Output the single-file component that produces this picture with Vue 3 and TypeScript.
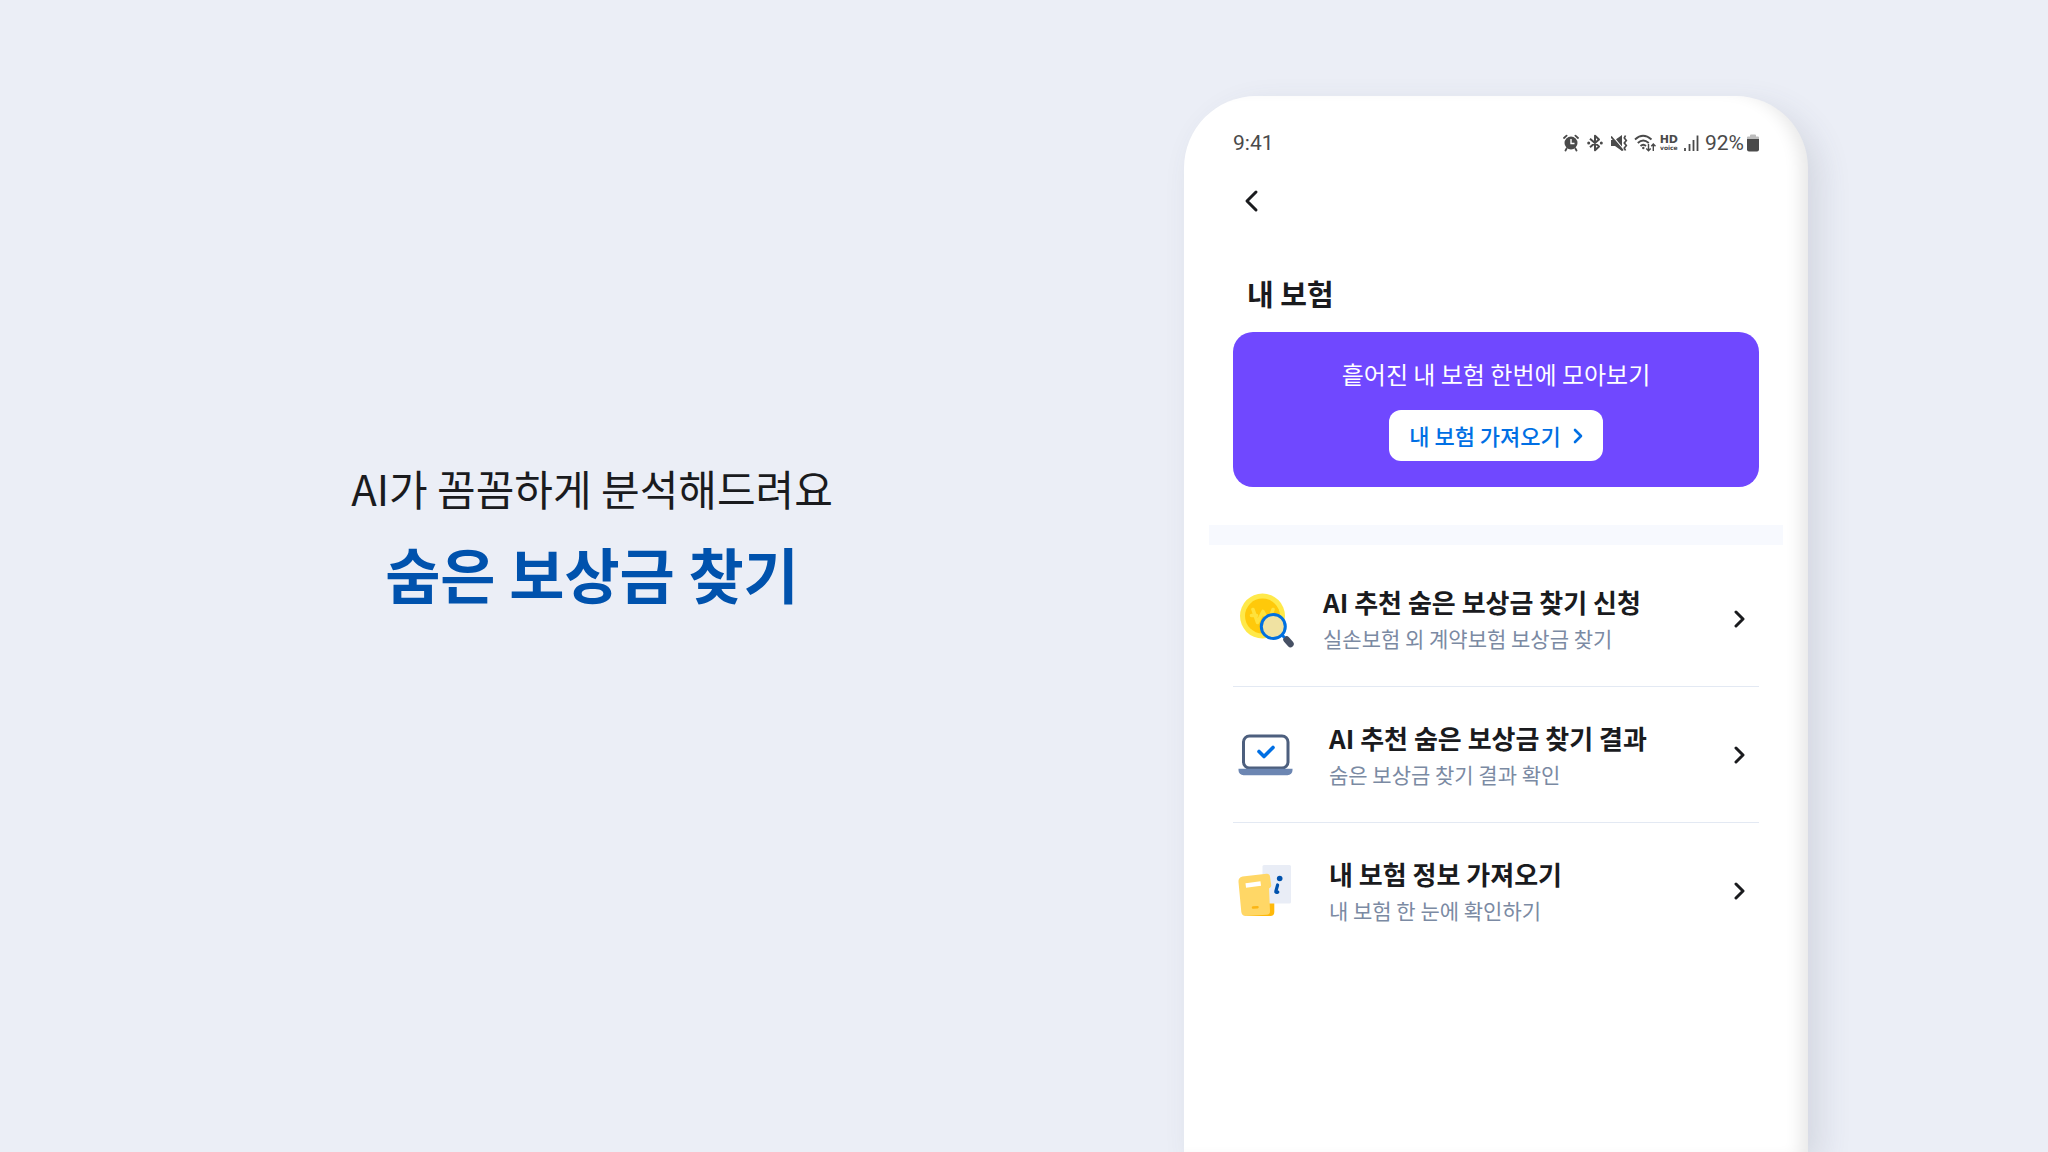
<script setup lang="ts">
type IconKind = 'coin' | 'laptop' | 'folder'

interface MenuItem {
  icon: IconKind
  title: string
  description: string
}

const menu: MenuItem[] = [
  { icon: 'coin', title: 'AI 추천 숨은 보상금 찾기 신청', description: '실손보험 외 계약보험 보상금 찾기' },
  { icon: 'laptop', title: 'AI 추천 숨은 보상금 찾기 결과', description: '숨은 보상금 찾기 결과 확인' },
  { icon: 'folder', title: '내 보험 정보 가져오기', description: '내 보험 한 눈에 확인하기' },
]
</script>

<template>
  <div class="page">
    <header class="intro">
      <p class="intro-lead">AI가 꼼꼼하게 분석해드려요</p>
      <h1 class="intro-title">숨은 보상금 찾기</h1>
    </header>

    <main class="phone">
      <div class="status">
        <span>9:41</span>
        <div class="status-icons">
          <svg class="glyph" width="16" height="18" viewBox="0 0 16 18">
            <circle cx="8" cy="9" r="6.5" fill="#4a4a4a" />
            <path d="M1 4 3.6 1.6M15 4l-2.600-2.400M3.600 14.500 2.500 16.500M12.400 14.500l1.100 2" stroke="#4a4a4a" stroke-width="1.800" fill="none" stroke-linecap="round" />
            <path d="M8 5v4.500h3.500" stroke="#fff" stroke-width="1.400" fill="none" />
          </svg>
          <svg class="glyph" width="16" height="18" viewBox="0 0 16 18">
            <path d="M3 4.800 12 12.500 8 16.300V1.700l4 3.800L3 13.200" stroke="#4a4a4a" stroke-width="2" fill="none" stroke-linejoin="round" />
            <circle cx="1.700" cy="9" r="1.500" fill="#4a4a4a" />
            <circle cx="14.300" cy="9" r="1.500" fill="#4a4a4a" />
          </svg>
          <svg class="glyph mute" width="17" height="18" viewBox="0 0 17 18">
            <path d="M0 6h4l7-5v16l-7-5H0z" fill="#4a4a4a" />
            <path d="M1 1.500 13 16" stroke="#fff" stroke-width="1.200" />
            <path d="M0 2.500 12 16.500" stroke="#4a4a4a" stroke-width="1.800" />
            <path d="M14.500 1.500 13.300 4l2 2.500-2 2.500 2 2.500-2 2.500 1.200 2.500" stroke="#4a4a4a" stroke-width="1.700" fill="none" />
          </svg>
          <svg class="glyph wifi" width="22" height="18" viewBox="0 0 22 18">
            <g stroke="#4a4a4a" stroke-width="1.800" fill="none">
              <path d="M1 5.500q8-7.500 16.500 0M3.800 9q5.300-5 11 0M6.500 12q2.700-2.500 5.500 0" />
              <path d="M14.500 10v7M12.300 14.500l2.200 2.300 2.200-2.300M19.300 17v-7M17.300 12.300l2-2.300 2.200 2.300" stroke-width="1.400" />
            </g>
            <circle cx="9.300" cy="14" r="1.200" fill="#4a4a4a" />
          </svg>
          <span class="hd"><b>HD</b><small>voice</small></span>
          <svg class="glyph signal" width="15" height="18" viewBox="0 0 15 18">
            <path d="M1 14v3M5.500 10v7M9.500 6v11M13.500 1.500V17" stroke="#4a4a4a" stroke-width="1.800" />
          </svg>
          <span>92%</span>
          <svg class="glyph battery" width="12" height="18" viewBox="0 0 12 18">
            <path d="M0 5V3.500Q0 2.500 1 2.500H3V1.500Q3 .5 4 .5H8Q9 .5 9 1.500V2.500H11Q12 2.500 12 3.500V5z" fill="#bdbdbd" />
            <path d="M0 5H12V15.500Q12 17.500 10 17.500H2Q0 17.500 0 15.500z" fill="#4a4a4a" />
          </svg>
        </div>
      </div>

      <button class="back" type="button" aria-label="뒤로">
        <svg width="16" height="24" viewBox="0 0 16 24">
          <path d="M13 3 4 12l9 9" fill="none" stroke="#1a1b1e" stroke-width="3" stroke-linecap="round" stroke-linejoin="round" />
        </svg>
      </button>

      <h2 class="heading">내 보험</h2>

      <section class="banner">
        <p class="banner-text">흩어진 내 보험 한번에 모아보기</p>
        <button class="banner-button" type="button">
          내 보험 가져오기
          <svg width="10" height="16" viewBox="0 0 10 16">
            <path d="M2 2l6 6-6 6" fill="none" stroke="#006fe4" stroke-width="2.600" stroke-linecap="round" stroke-linejoin="round" />
          </svg>
        </button>
      </section>

      <div class="separator"></div>

      <ul class="menu">
        <li v-for="item in menu" :key="item.title">
          <a class="row" href="#">
            <span class="row-icon" :class="item.icon">
              <svg v-if="item.icon === 'coin'" width="62" height="60" viewBox="0 0 62 60">
                <circle cx="29.500" cy="27" r="22.500" fill="#ffe94a" />
                <circle cx="29.500" cy="27" r="17.500" fill="#ffc90a" />
                <path d="M20 20.500l4.500 13 5.500-11 5.500 11 4.500-13M18.500 26.500h5" fill="none" stroke="#ffe23c" stroke-width="3.600" stroke-linecap="round" stroke-linejoin="round" />
                <path d="M53.500 50.500l4 4.500" stroke="#465064" stroke-width="6.500" stroke-linecap="round" />
                <path d="M48.500 45.500l3 3" stroke="#0070e0" stroke-width="3" />
                <circle cx="40.300" cy="37.500" r="12" fill="#f0e2a2" stroke="#0070e0" stroke-width="3" />
              </svg>
              <svg v-else-if="item.icon === 'laptop'" width="62" height="60" viewBox="0 0 62 60">
                <rect x="10.500" y="11" width="44.500" height="32" rx="6" fill="#fff" stroke="#4d5f7e" stroke-width="3" />
                <path d="M5.500 43.800h54v1.400a5 5 0 0 1-5 5h-44a5 5 0 0 1-5-5z" fill="#6c86b2" />
                <path d="M26 26.500l5 5 9-9" fill="none" stroke="#006fe4" stroke-width="3.600" stroke-linecap="round" stroke-linejoin="round" />
              </svg>
              <svg v-else width="62" height="60" viewBox="0 0 62 60">
                <path d="M14 55h23.300a4 4 0 0 0 4-4V30L12 42z" fill="#ffb90a" />
                <rect x="29.500" y="4" width="28.500" height="38.500" rx="1.500" fill="#e9edf6" />
                <path d="M9.500 15.500l24-2.700q3-.3 3.500 2.700l1.200 8.500q.3 2.500-2.200 3.500L37 50q.3 3.500-3.500 3.800L13 55q-4 .2-4.700-4L5.500 21q-.5-4.500 4-5.500z" fill="#ffd766" />
                <path d="M15 24.200l10.500-1.400" stroke="#fff" stroke-width="4.500" stroke-linecap="square" stroke-linejoin="round" />
                <path d="M20 46.600l4.500-.4" stroke="#fbb515" stroke-width="2.500" stroke-linecap="round" />
                <circle cx="46.700" cy="17.500" r="2.800" fill="#0052ad" />
                <path d="M44.600 24l-1.800 6.500q-.3 1.200 2 .7" fill="none" stroke="#0052ad" stroke-width="3.200" stroke-linecap="round" stroke-linejoin="round" />
              </svg>
            </span>
            <span class="row-text">
              <strong class="row-title">{{ item.title }}</strong>
              <span class="row-description">{{ item.description }}</span>
            </span>
            <svg class="row-arrow" width="12" height="20" viewBox="0 0 12 20">
              <path d="M2 3l7 7-7 7" fill="none" stroke="#1a1b1e" stroke-width="3" stroke-linecap="round" stroke-linejoin="round" />
            </svg>
          </a>
        </li>
      </ul>
    </main>
  </div>
</template>

<style>
body {
  margin: 0;
  background: #ebeef6;
}
</style>

<style scoped>
.page {
  display: grid;
  grid-template-columns: 1fr 624px;
  padding-right: 240px;
  min-height: 100vh;
  box-sizing: border-box;
  overflow: hidden;
  color: #1a1b1e;
  font-family: "Noto Sans CJK KR", sans-serif;
}

p,
h1,
h2,
ul {
  margin: 0;
  padding: 0;
}

button {
  font: inherit;
  border: 0;
  cursor: pointer;
}

.intro {
  padding-top: 446px;
  text-align: center;
}

.intro-lead {
  font-size: 42px;
  line-height: 84px;
}

.intro-title {
  color: #0052ad;
  font-size: 60px;
  line-height: 86px;
  font-weight: 700;
}

.phone {
  display: flex;
  flex-direction: column;
  margin-top: 96px;
  padding: 32px 49px 0;
  border-radius: 72px 72px 0 0;
  background: #fff;
  box-shadow:
    12px 12px 32px rgba(70, 80, 100, 0.14),
    inset -16px 0 16px -8px rgba(0, 0, 0, 0.09);
}

.status {
  display: flex;
  align-items: center;
  justify-content: space-between;
  height: 30px;
  color: #4a4a4a;
  font-family: Roboto, sans-serif;
  font-size: 21px;
}

.status-icons {
  display: flex;
  align-items: center;
}

.glyph {
  margin-right: 8px;
}

.mute {
  margin-right: 6px;
}

.wifi {
  margin-right: 4px;
}

.hd {
  display: flex;
  flex-direction: column;
  align-items: center;
  margin-right: 6px;
  font-family: "DejaVu Sans", sans-serif;
}

.hd b {
  font-size: 11px;
  line-height: 10px;
}

.hd small {
  font-size: 6px;
  line-height: 6px;
  font-weight: 700;
}

.signal {
  margin-right: 6px;
}

.battery {
  margin-right: 0;
  margin-left: 3px;
}

.back {
  display: flex;
  align-self: flex-start;
  margin-top: 31px;
  padding: 0 10px;
  background: none;
}

.heading {
  margin-top: 60px;
  padding-left: 14px;
  font-size: 29px;
  line-height: 40px;
  font-weight: 700;
}

.banner {
  display: flex;
  flex-direction: column;
  align-items: center;
  margin-top: 19px;
  padding: 24px 0 26px;
  border-radius: 20px;
  background: #7048ff;
}

.banner-text {
  color: #fff;
  font-size: 24px;
  line-height: 36px;
}

.banner-button {
  display: flex;
  align-items: center;
  gap: 12px;
  margin-top: 18px;
  padding: 0 20px;
  border-radius: 12px;
  background: #fff;
  color: #006fe4;
  font-size: 22px;
  line-height: 51px;
  font-weight: 500;
}

.separator {
  height: 20px;
  margin: 38px -24px 0;
  background: #f7f9fe;
}

.menu {
  padding-top: 6px;
  list-style: none;
}

.menu li + li {
  border-top: 1px solid #e3e9f3;
}

.row {
  display: flex;
  align-items: center;
  height: 135px;
  color: inherit;
  text-decoration: none;
}

.row-icon {
  width: 96px;
}

.row-icon.coin {
  width: 90px;
}

.row-icon svg {
  display: block;
}

.row-text {
  display: flex;
  flex-direction: column;
  flex: 1;
  padding-top: 2px;
}

.row-title {
  font-size: 26px;
  line-height: 36px;
  font-weight: 700;
}

.row-description {
  color: #7b8aa3;
  font-size: 21px;
  line-height: 36px;
}

.row-arrow {
  margin-right: 13px;
}
</style>
